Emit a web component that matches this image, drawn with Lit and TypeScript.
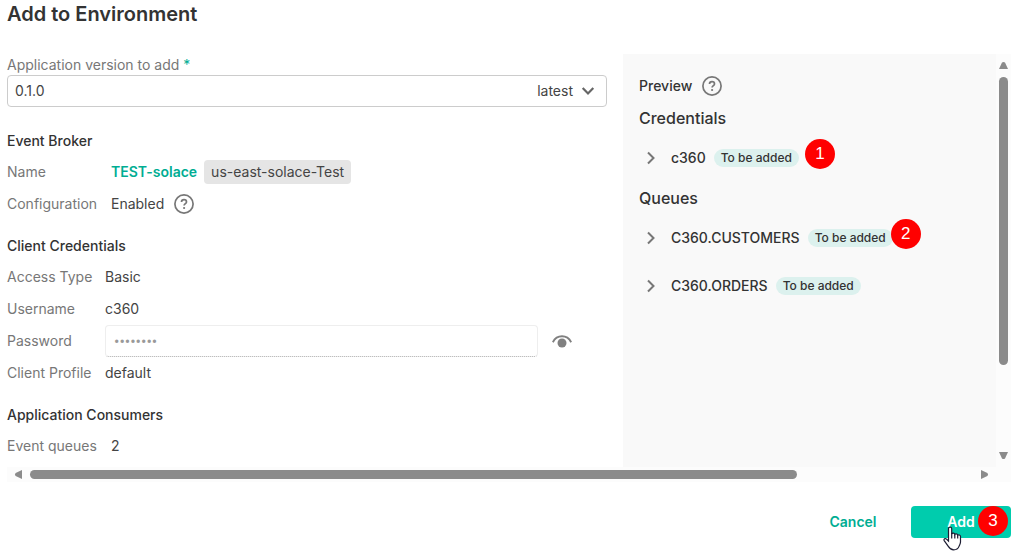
import { LitElement, html, css, svg } from "lit";
import { customElement, property, state } from "lit/decorators.js";

const helpIcon = html`<svg class="help" viewBox="0 0 20 20" width="20" height="20" aria-hidden="true">
  <circle cx="10" cy="10" r="9.1" fill="none" stroke="#777" stroke-width="1.7" />
  <path d="M7.5 8.1C7.5 6.6 8.6 5.7 10 5.7s2.5.9 2.5 2.2c0 1.7-2.4 1.8-2.4 3.7" fill="none" stroke="#777" stroke-width="1.7" />
  <circle cx="10.1" cy="14" r="1.1" fill="#777" />
</svg>`;

@customElement("scroll-bar")
export class ScrollBar extends LitElement {
  @property({ reflect: true }) direction = "vertical";
  @property({ type: Number }) extent = 100;

  static styles = css`
    :host { display: flex; background: #fcfcfc; }
    :host([direction="vertical"]) { flex-direction: column; width: 15px; }
    :host([direction="horizontal"]) { height: 15px; }
    .arrow {
      display: grid; flex: none; place-items: center;
      width: 15px; height: 23px; padding: 0; border: 0; background: none;
    }
    :host([direction="horizontal"]) .arrow { width: 23px; height: 15px; }
    .track { display: flex; flex: 1; min-width: 0; min-height: 0; padding: 0 3px; }
    :host([direction="horizontal"]) .track { padding: 3px 0; }
    .thumb { width: 100%; height: 100%; border-radius: 5px; background: #8b8b8b; }
  `;

  render() {
    const vertical = this.direction === "vertical";
    const size = vertical ? `height:${this.extent}%` : `width:${this.extent}%`;
    const back = vertical ? "M0 8h9L6 1.6Q4.500 .2 3 1.600z" : "M8 0v9L1.600 6Q.2 4.500 1.600 3z";
    const next = vertical ? "M0 1h9L6 7.400Q4.500 8.800 3 7.400z" : "M1 0v9L7.400 6Q8.800 4.500 7.400 3z";
    const glyph = (d: string) => svg`<path d=${d} fill="#8b8b8b" />`;
    return html`
      <button class="arrow" aria-label="Scroll back"><svg width="9" height="9">${glyph(back)}</svg></button>
      <div class="track"><div class="thumb" style=${size}></div></div>
      <button class="arrow" aria-label="Scroll forward"><svg width="9" height="9">${glyph(next)}</svg></button>
    `;
  }
}

@customElement("preview-item")
export class PreviewItem extends LitElement {
  @property() name = "";
  @property() step = "";

  static styles = css`
    :host { display: flex; align-items: center; height: 48px; }
    .toggle {
      display: grid; place-items: center; width: 24px; height: 24px;
      margin-right: 8px; padding: 0; border: 0; background: none;
    }
    .name { font-weight: 500; font-size: 14px; margin-right: 8px; white-space: nowrap; }
    .pill {
      position: relative; padding: 0 7px; border-radius: 9px; background: #dcf1ee;
      font-size: 12px; font-weight: 500; line-height: 18px; white-space: nowrap;
    }
    .step { position: absolute; top: -10px; left: calc(100% + 6px); }
    .step.close { left: calc(100% - 2px); }
  `;

  render() {
    return html`
      <button class="toggle" aria-label="Expand ${this.name}">
        <svg width="10" height="14" viewBox="0 0 10 14"><path d="M2 1.500l5.500 5.500L2 12.500" fill="none" stroke="#777" stroke-width="2" /></svg>
      </button>
      <span class="name">${this.name}</span>
      <span class="pill">To be added${this.step
        ? html`<step-marker class="step ${this.step === "2" ? "close" : ""}">${this.step}</step-marker>`
        : ""}</span>
    `;
  }
}

@customElement("step-marker")
export class StepMarker extends LitElement {
  static styles = css`
    :host {
      display: grid; place-items: center; width: 30px; height: 30px; border-radius: 50%;
      background: #f00; color: #fff; font: 400 17px/30px "Liberation Sans", sans-serif;
    }
  `;

  render() {
    return html`<slot></slot>`;
  }
}

@customElement("app-root")
export class AppRoot extends LitElement {
  @state() private revealed = false;

  static styles = css`
    * { box-sizing: border-box; }
    :host {
      display: block; padding: 0 14px 0 7px; color: #333; background: #fff;
      font: 400 14px/20px Inter, sans-serif;
    }
    h1, h2, h3, dl, dd { margin: 0; }
    h1 { height: 54px; font-size: 20px; line-height: 28px; font-weight: 600; }
    .body { display: grid; grid-template-columns: minmax(0, 1fr) 15px; }
    .panes { display: grid; grid-template-columns: minmax(0, 600fr) minmax(0, 373fr); column-gap: 16px; }
    .form { padding-bottom: 5px; }
    .caption { display: block; line-height: 21px; color: #777; }
    .required { color: #00ad93; }
    .combo { display: grid; grid-template-columns: minmax(0, 1fr) auto; align-items: center; margin-bottom: 19px; }
    .combo select {
      grid-area: 1 / 1 / 2 / 3; width: 100%; height: 32px; padding: 0 7px; appearance: none;
      border: 1px solid #ccc; border-radius: 4px; background: #fff; color: #444; font: inherit;
    }
    .tail { grid-area: 1 / 2; display: flex; align-items: center; gap: 8px; padding-right: 12px; color: #444; pointer-events: none; }
    h2 { font-size: 14px; line-height: 30px; font-weight: 500; }
    .fields { margin-bottom: 11px; }
    .fields:last-child { margin-bottom: 0; }
    .field { display: grid; grid-template-columns: 104px minmax(0, 1fr); align-items: center; height: 32px; }
    .narrow .field { grid-template-columns: 98px minmax(0, 1fr); }
    .field > dt { color: #777; white-space: nowrap; }
    .field > dd { color: #444; }
    .value { display: flex; align-items: center; }
    .broker { color: #00ad93; font-weight: 600; text-decoration: none; }
    .tag { margin-left: 7px; padding: 0 7px; border-radius: 4px; background: #e5e5e5; color: #444; line-height: 24px; }
    .value .help { margin-left: 10px; }
    .password {
      flex: 1; min-width: 0; height: 32px; padding: 0 8px; border: 1px solid #eee;
      border-bottom: 1px dotted #aaa; border-radius: 4px; background: #fff; color: #999;
      font: 400 16px/20px Roboto, sans-serif;
    }
    .eye { display: grid; place-items: center; width: 48px; height: 32px; margin-right: 21px; padding: 0; border: 0; background: none; }
    .preview { padding: 16px; background: #f9f9f9; }
    .preview-title { display: flex; align-items: center; gap: 10px; height: 32px; font-weight: 500; }
    h3 { font-size: 16px; line-height: 32px; font-weight: 500; }
    .corner { background: #fcfcfc; }
    .actions { display: flex; justify-content: flex-end; gap: 8px; padding: 24px 0 17px; }
    .action {
      position: relative; width: 100px; height: 32px; padding: 0; border: 0; border-radius: 4px;
      background: none; color: #00ad93; font: 600 14px/20px Inter, sans-serif;
    }
    .primary { background: #00ccad; color: #fff; }
    .marker { position: absolute; top: 0; right: 3px; }
    .pointer { position: absolute; top: 20px; left: 32px; }
  `;

  render() {
    return html`
      <h1>Add to Environment</h1>
      <div class="body">
        <div class="panes">
          <form class="form">
            <label class="caption" for="version">Application version to add <span class="required">*</span></label>
            <div class="combo">
              <select id="version"><option>0.1.0</option></select>
              <span class="tail">latest
                <svg width="14" height="10" viewBox="0 0 14 10"><path d="M1.700 2l5.300 5.500L12.300 2" fill="none" stroke="#666" stroke-width="2.200" /></svg>
              </span>
            </div>

            <h2>Event Broker</h2>
            <dl class="fields">
              <div class="field"><dt>Name</dt><dd class="value"><a class="broker" href="#broker">TEST-solace</a><span class="tag">us-east-solace-Test</span></dd></div>
              <div class="field"><dt>Configuration</dt><dd class="value">Enabled ${helpIcon}</dd></div>
            </dl>

            <h2>Client Credentials</h2>
            <dl class="fields narrow">
              <div class="field"><dt>Access Type</dt><dd>Basic</dd></div>
              <div class="field"><dt>Username</dt><dd>c360</dd></div>
              <div class="field">
                <dt><label for="password">Password</label></dt>
                <dd class="value">
                  <input class="password" id="password" type=${this.revealed ? "text" : "password"} value="solace12" disabled />
                  <button class="eye" type="button" aria-label="Show password" @click=${() => (this.revealed = !this.revealed)}>
                    <svg width="20" height="13" viewBox="0 0 20 13">
                      <path d="M.8 7.200C2.800 3.400 6 1.300 10 1.300s7.200 2.100 9.200 5.900" fill="none" stroke="#808080" stroke-width="1.900" />
                      <circle cx="10" cy="8" r="4.500" fill="#808080" />
                    </svg>
                  </button>
                </dd>
              </div>
              <div class="field"><dt>Client Profile</dt><dd>default</dd></div>
            </dl>

            <h2>Application Consumers</h2>
            <dl class="fields">
              <div class="field"><dt>Event queues</dt><dd>2</dd></div>
            </dl>
          </form>

          <section class="preview">
            <div class="preview-title">Preview ${helpIcon}</div>
            <h3>Credentials</h3>
            <preview-item name="c360" step="1"></preview-item>
            <h3>Queues</h3>
            <preview-item name="C360.CUSTOMERS" step="2"></preview-item>
            <preview-item name="C360.ORDERS"></preview-item>
          </section>
        </div>
        <scroll-bar direction="vertical" .extent=${78.5}></scroll-bar>
        <scroll-bar direction="horizontal" .extent=${81.3}></scroll-bar>
        <div class="corner"></div>
      </div>
      <div class="actions">
        <button class="action">Cancel</button>
        <button class="action primary">Add
          <step-marker class="marker">3</step-marker>
          <svg class="pointer" width="19" height="25" viewBox="0 0 19 25" aria-hidden="true">
            <path d="M5.500 15V2.600C5.500 .5 8.700 .5 8.700 2.600V8c.5-1.300 2.900-1.200 3.100.5.7-1.100 2.800-.8 2.900.8.9-.9 2.800-.4 2.800 1.300v5.400c0 2-1 3-1.600 4.600-.8 2.100-2.500 3.200-5.200 3.200-3 0-4.200-1.400-5.400-3.400L1.200 14.600c-.8-1.500 1-2.700 2.300-1.500z" fill="#fff" stroke="#1d1d33" stroke-width="1.200" />
            <path d="M8.700 7v5.500M11.800 8.500v4M14.700 9.500v3" stroke="#1d1d33" stroke-width="1.200" />
          </svg>
        </button>
      </div>
    `;
  }
}
